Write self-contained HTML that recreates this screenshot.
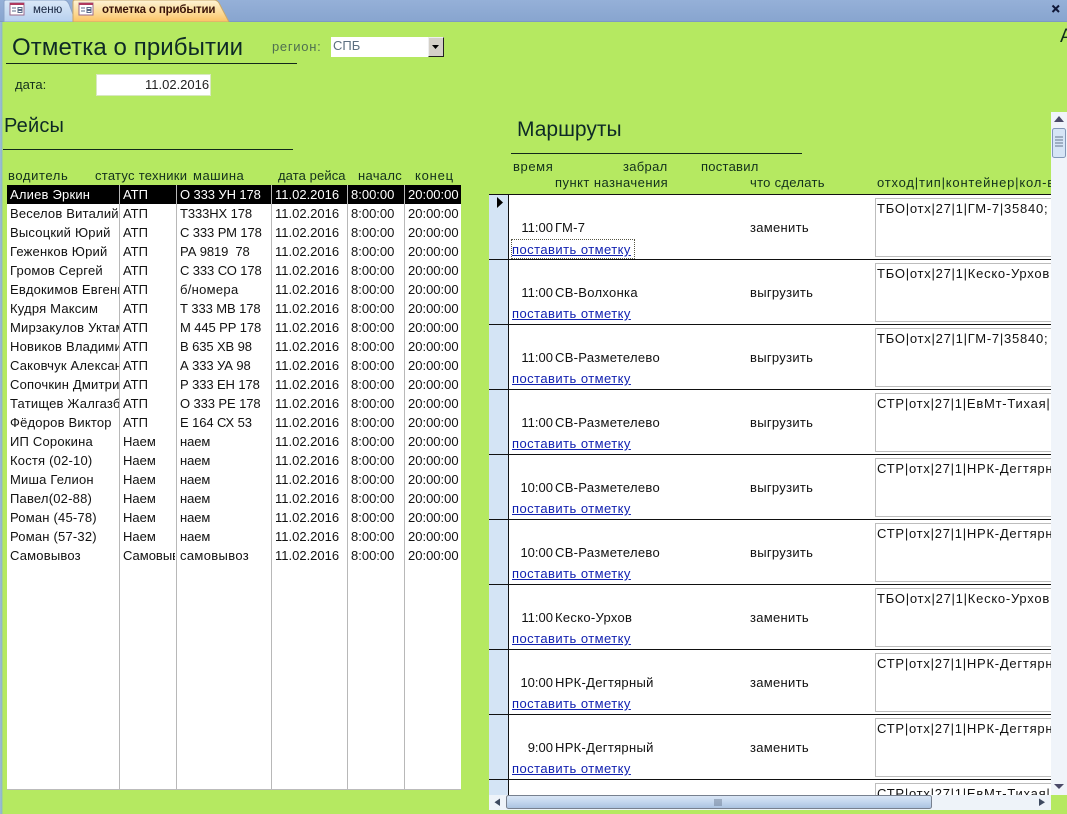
<!DOCTYPE html>
<html lang="ru"><head><meta charset="utf-8"><title>отметка о прибытии</title>
<style>
html,body{margin:0;padding:0}
body{width:1067px;height:814px;position:relative;overflow:hidden;background:#b5e961;font-family:"Liberation Sans","DejaVu Sans",sans-serif;font-size:13px;color:#111}
div,span,a{position:absolute;white-space:nowrap;box-sizing:border-box}
.h{color:#12301c;line-height:16px;height:16px}
.ln{background:#12281a;height:1px}
#grid{left:7px;top:185px;width:454px;height:605px;background:#fff;border-bottom:1px solid #bbb}
.v{top:0;bottom:0;width:1px;background:#b8b8b8}
.r{left:0;width:454px;height:19px;line-height:19px}
.r span{top:0;height:19px;overflow:hidden}
.a{left:3px;width:109px;letter-spacing:.2px}.b{left:116px;width:52px}.c{left:173px;width:90px;letter-spacing:-.1px}.d{left:268px;width:70px}.e{left:344px;width:50px}.f{left:401px;width:53px}
#right{left:489px;top:195px;width:562px;height:600px;overflow:hidden;background:#fff}
#sel{left:0;top:0;width:20px;height:600px;background:#d4e4f5;border-right:1px solid #111}
.rw{left:0;width:562px;height:65px}
.rw i{position:absolute;left:0;right:0;top:64px;height:1px;background:#111}
.t{left:0;width:64px;top:25px;text-align:right;line-height:16px}
.p{left:66px;top:25px;line-height:16px;letter-spacing:.3px}
.w{left:261px;top:25px;line-height:16px;letter-spacing:.3px}
.l{left:23px;top:46px;color:#0f1fb0;text-decoration:underline;line-height:16px;letter-spacing:.45px}
.x{left:386px;top:3px;width:190px;height:59px;border:1px solid #bdbdbd;line-height:16px;overflow:hidden;background:#fff}
.x span{left:1px;top:2px;letter-spacing:.75px}
</style></head><body>
<!-- tab bar -->
<div style="left:0;top:0;width:1067px;height:21px;background:linear-gradient(#95b0d8,#88a5cf)"></div>
<div style="left:0;top:21px;width:1067px;height:1px;background:#7d9ac4"></div>
<div style="left:0;top:22px;width:3px;height:792px;background:linear-gradient(90deg,#9dbbd8,#8fb8c8 60%,#b5e961)"></div>
<svg style="position:absolute;left:0;top:0" width="240" height="22">
<defs><linearGradient id="g1" x1="0" y1="0" x2="0" y2="1"><stop offset="0" stop-color="#dce9f8"/><stop offset="1" stop-color="#b7d0ee"/></linearGradient>
<linearGradient id="g2" x1="0" y1="0" x2="0" y2="1"><stop offset="0" stop-color="#fdf3d6"/><stop offset=".6" stop-color="#fcd994"/><stop offset="1" stop-color="#fbc263"/></linearGradient></defs>
<path d="M4 22V2Q4 0 6 0H64Q67 0 69 4L76 22Z" fill="url(#g1)" stroke="#8aa3c8"/>
<path d="M73 22V2Q73 0 75 0H214Q217 0 219 3L229 22Z" fill="url(#g2)" stroke="#c9a86a"/>
<g fill="#fff" stroke="#9a6a8c"><rect x="10" y="3" width="14" height="12"/><rect x="79" y="3" width="14" height="12"/></g>
<g fill="#b0395e"><rect x="10" y="3" width="14" height="2"/><rect x="79" y="3" width="14" height="2"/></g>
<g stroke="#5a6a8a" fill="none"><path d="M12 8h4M12 11h4M18 7.500h4v2h-4zM18 10.500h4v2h-4z"/><path d="M81 8h4M81 11h4M87 7.500h4v2h-4zM87 10.500h4v2h-4z"/></g>
</svg>
<span style="left:33px;top:3px;font-size:11.500px;line-height:14px;color:#15233e">меню</span>
<span style="left:102px;top:3px;font-size:11.500px;font-weight:bold;line-height:14px;color:#3a1408;letter-spacing:-.15px">отметка о прибытии</span>
<svg style="position:absolute;left:1051px;top:4px" width="10" height="10"><path d="M1.500 1.500L8 8M8 1.500L1.500 8" stroke="#101838" stroke-width="2"/></svg>
<span style="left:1060px;top:26px;font-size:19px;line-height:22px;color:#12301c">A</span>
<!-- form head -->
<span style="left:12px;top:33px;font-size:24px;line-height:30px;color:#0e2a26;letter-spacing:.1px">Отметка о прибытии</span>
<div class="ln" style="left:6px;top:63px;width:291px"></div>
<span style="left:272px;top:39px;line-height:16px;color:#4f7050;letter-spacing:.7px">регион:</span>
<div style="left:331px;top:37px;width:113px;height:20px;background:#fff"></div>
<span style="left:333px;top:38px;line-height:16px;color:#5c6f80">СПБ</span>
<div style="left:428px;top:37px;width:16px;height:20px;background:#d4d0c8;border:1px solid;border-color:#eee #222 #222 #eee"></div>
<svg style="position:absolute;left:432px;top:45px" width="8" height="5"><path d="M0 0H7L3.500 4Z" fill="#000"/></svg>
<span style="left:15px;top:77px;line-height:16px;color:#12301c">дата:</span>
<div style="left:96px;top:74px;width:115px;height:22px;background:#fff;border:1px solid #d8e8c0"></div>
<span style="left:145px;top:77px;line-height:16px;color:#222">11.02.2016</span>
<span style="left:4px;top:113px;font-size:20px;line-height:26px;color:#0e2a26;letter-spacing:.2px">Рейсы</span>
<div class="ln" style="left:3px;top:149px;width:290px"></div>
<span style="left:517px;top:117px;font-size:21px;line-height:26px;color:#0e2a26">Маршруты</span>
<div class="ln" style="left:511px;top:153px;width:291px"></div>
<!-- left headers -->
<span class="h" style="left:8px;top:168px;letter-spacing:.6px">водитель</span>
<span class="h" style="left:95px;top:168px;letter-spacing:.27px">статус техники</span>
<span class="h" style="left:193px;top:168px;letter-spacing:.5px">машина</span>
<span class="h" style="left:278px;top:168px;letter-spacing:.1px">дата рейса</span>
<span class="h" style="left:358px;top:168px;letter-spacing:.3px">началс</span>
<span class="h" style="left:415px;top:168px;letter-spacing:.8px">конец</span>
<!-- left grid -->
<div id="grid">
<div class="r" style="top:0;background:#000;color:#fff"><span class="a">Алиев Эркин</span><span class="b">АТП</span><span class="c">О 333 УН 178</span><span class="d">11.02.2016</span><span class="e">8:00:00</span><span class="f">20:00:00</span></div>
<div class="r" style="top:19px"><span class="a">Веселов Виталий</span><span class="b">АТП</span><span class="c">Т333НХ 178</span><span class="d">11.02.2016</span><span class="e">8:00:00</span><span class="f">20:00:00</span></div>
<div class="r" style="top:38px"><span class="a">Высоцкий Юрий</span><span class="b">АТП</span><span class="c">С 333 РМ 178</span><span class="d">11.02.2016</span><span class="e">8:00:00</span><span class="f">20:00:00</span></div>
<div class="r" style="top:57px"><span class="a">Геженков Юрий</span><span class="b">АТП</span><span class="c">РА 9819&nbsp; 78</span><span class="d">11.02.2016</span><span class="e">8:00:00</span><span class="f">20:00:00</span></div>
<div class="r" style="top:76px"><span class="a">Громов Сергей</span><span class="b">АТП</span><span class="c">С 333 СО 178</span><span class="d">11.02.2016</span><span class="e">8:00:00</span><span class="f">20:00:00</span></div>
<div class="r" style="top:95px"><span class="a">Евдокимов Евгений</span><span class="b">АТП</span><span class="c" style="letter-spacing:.3px">б/номера</span><span class="d">11.02.2016</span><span class="e">8:00:00</span><span class="f">20:00:00</span></div>
<div class="r" style="top:114px"><span class="a">Кудря Максим</span><span class="b">АТП</span><span class="c">Т 333 МВ 178</span><span class="d">11.02.2016</span><span class="e">8:00:00</span><span class="f">20:00:00</span></div>
<div class="r" style="top:133px"><span class="a">Мирзакулов Уктам</span><span class="b">АТП</span><span class="c">М 445 РР 178</span><span class="d">11.02.2016</span><span class="e">8:00:00</span><span class="f">20:00:00</span></div>
<div class="r" style="top:152px"><span class="a">Новиков Владимир</span><span class="b">АТП</span><span class="c">В 635 ХВ 98</span><span class="d">11.02.2016</span><span class="e">8:00:00</span><span class="f">20:00:00</span></div>
<div class="r" style="top:171px"><span class="a">Саковчук Александр</span><span class="b">АТП</span><span class="c">А 333 УА 98</span><span class="d">11.02.2016</span><span class="e">8:00:00</span><span class="f">20:00:00</span></div>
<div class="r" style="top:190px"><span class="a">Сопочкин Дмитрий</span><span class="b">АТП</span><span class="c">Р 333 ЕН 178</span><span class="d">11.02.2016</span><span class="e">8:00:00</span><span class="f">20:00:00</span></div>
<div class="r" style="top:209px"><span class="a">Татищев Жалгазбек</span><span class="b">АТП</span><span class="c">О 333 РЕ 178</span><span class="d">11.02.2016</span><span class="e">8:00:00</span><span class="f">20:00:00</span></div>
<div class="r" style="top:228px"><span class="a">Фёдоров Виктор</span><span class="b">АТП</span><span class="c">Е 164 СХ 53</span><span class="d">11.02.2016</span><span class="e">8:00:00</span><span class="f">20:00:00</span></div>
<div class="r" style="top:247px"><span class="a">ИП Сорокина</span><span class="b">Наем</span><span class="c">наем</span><span class="d">11.02.2016</span><span class="e">8:00:00</span><span class="f">20:00:00</span></div>
<div class="r" style="top:266px"><span class="a">Костя (02-10)</span><span class="b">Наем</span><span class="c">наем</span><span class="d">11.02.2016</span><span class="e">8:00:00</span><span class="f">20:00:00</span></div>
<div class="r" style="top:285px"><span class="a">Миша Гелион</span><span class="b">Наем</span><span class="c">наем</span><span class="d">11.02.2016</span><span class="e">8:00:00</span><span class="f">20:00:00</span></div>
<div class="r" style="top:304px"><span class="a">Павел(02-88)</span><span class="b">Наем</span><span class="c">наем</span><span class="d">11.02.2016</span><span class="e">8:00:00</span><span class="f">20:00:00</span></div>
<div class="r" style="top:323px"><span class="a">Роман (45-78)</span><span class="b">Наем</span><span class="c">наем</span><span class="d">11.02.2016</span><span class="e">8:00:00</span><span class="f">20:00:00</span></div>
<div class="r" style="top:342px"><span class="a">Роман (57-32)</span><span class="b">Наем</span><span class="c">наем</span><span class="d">11.02.2016</span><span class="e">8:00:00</span><span class="f">20:00:00</span></div>
<div class="r" style="top:361px"><span class="a">Самовывоз</span><span class="b">Самовывоз</span><span class="c" style="letter-spacing:.35px">самовывоз</span><span class="d">11.02.2016</span><span class="e">8:00:00</span><span class="f">20:00:00</span></div>
<div class="v" style="left:112px"></div><div class="v" style="left:169px"></div><div class="v" style="left:264px"></div><div class="v" style="left:340px"></div><div class="v" style="left:397px"></div>
</div>
<!-- right headers -->
<span class="h" style="left:513px;top:159px;letter-spacing:.6px">время</span>
<span class="h" style="left:623px;top:159px;letter-spacing:.3px">забрал</span>
<span class="h" style="left:701px;top:159px;letter-spacing:.25px">поставил</span>
<span class="h" style="left:555px;top:175px;letter-spacing:.45px">пункт назначения</span>
<span class="h" style="left:750px;top:175px;letter-spacing:.3px">что сделать</span>
<div class="h" style="left:877px;top:175px;width:174px;overflow:hidden;letter-spacing:.8px">отход|тип|контейнер|кол-во</div>
<div style="left:489px;top:194px;width:562px;height:1px;background:#111"></div>
<!-- right list -->
<div id="right">
<div id="sel"></div>
<div class="rw" style="top:0"><i></i><span class="t">11:00</span><span class="p">ГМ-7</span><span class="w">заменить</span><a class="l" style="top:47px">поставить отметку</a><div class="x"><span>ТБО|отх|27|1|ГМ-7|35840;</span></div></div>
<div class="rw" style="top:65px"><i></i><span class="t">11:00</span><span class="p">СВ-Волхонка</span><span class="w">выгрузить</span><a class="l">поставить отметку</a><div class="x"><span>ТБО|отх|27|1|Кеско-Урхов</span></div></div>
<div class="rw" style="top:130px"><i></i><span class="t">11:00</span><span class="p">СВ-Разметелево</span><span class="w">выгрузить</span><a class="l">поставить отметку</a><div class="x"><span>ТБО|отх|27|1|ГМ-7|35840;</span></div></div>
<div class="rw" style="top:195px"><i></i><span class="t">11:00</span><span class="p">СВ-Разметелево</span><span class="w">выгрузить</span><a class="l">поставить отметку</a><div class="x"><span>СТР|отх|27|1|ЕвМт-Тихая|</span></div></div>
<div class="rw" style="top:260px"><i></i><span class="t">10:00</span><span class="p">СВ-Разметелево</span><span class="w">выгрузить</span><a class="l">поставить отметку</a><div class="x"><span>СТР|отх|27|1|НРК-Дегтярный</span></div></div>
<div class="rw" style="top:325px"><i></i><span class="t">10:00</span><span class="p">СВ-Разметелево</span><span class="w">выгрузить</span><a class="l">поставить отметку</a><div class="x"><span>СТР|отх|27|1|НРК-Дегтярный</span></div></div>
<div class="rw" style="top:390px"><i></i><span class="t">11:00</span><span class="p">Кеско-Урхов</span><span class="w">заменить</span><a class="l">поставить отметку</a><div class="x"><span>ТБО|отх|27|1|Кеско-Урхов</span></div></div>
<div class="rw" style="top:455px"><i></i><span class="t">10:00</span><span class="p">НРК-Дегтярный</span><span class="w">заменить</span><a class="l">поставить отметку</a><div class="x"><span>СТР|отх|27|1|НРК-Дегтярный</span></div></div>
<div class="rw" style="top:520px"><i></i><span class="t">9:00</span><span class="p">НРК-Дегтярный</span><span class="w">заменить</span><a class="l">поставить отметку</a><div class="x"><span>СТР|отх|27|1|НРК-Дегтярный</span></div></div>
<div class="rw" style="top:585px"><div class="x"><span>СТР|отх|27|1|ЕвМт-Тихая|</span></div></div>
</div>
<svg style="position:absolute;left:496px;top:197px" width="9" height="12"><path d="M1 0V11L7 5.500Z" fill="#000"/></svg>
<div style="left:511px;top:239px;width:124px;height:20px;border:1px dotted #554"></div>
<!-- vertical scrollbar -->
<div style="left:1051px;top:112px;width:16px;height:683px;background:#f0f4fa"></div>
<svg style="position:absolute;left:1051px;top:112px" width="16" height="50">
<path d="M3 10L8 4L13 10Z" fill="#4a4a68"/>
<rect x="1.500" y="16.500" width="13" height="29" rx="2" fill="#d6e5f6" stroke="#8298b8"/>
<path d="M4 25h8M4 28h8M4 31h8M4 34h8" stroke="#66788f"/>
</svg>
<svg style="position:absolute;left:1051px;top:780px" width="16" height="14"><path d="M3 4H13L8 9Z" fill="#4a4a68"/></svg>
<!-- horizontal scrollbar -->
<div style="left:489px;top:795px;width:562px;height:15px;background:#eef3f9"></div>
<svg style="position:absolute;left:489px;top:795px" width="578" height="15">
<defs><linearGradient id="g3" x1="0" y1="0" x2="0" y2="1"><stop offset="0" stop-color="#dbe7f6"/><stop offset=".5" stop-color="#c3d6ee"/><stop offset="1" stop-color="#a9c1de"/></linearGradient></defs>
<path d="M11 3.500V11L5.500 7.250Z" fill="#3e4a60"/>
<rect x="17.500" y="0.500" width="425" height="13" rx="2" fill="url(#g3)" stroke="#77808f"/>
<path d="M226 4v7M228 4v7M230 4v7M232 4v7" stroke="#6d7d94"/>
<path d="M550 3.500V11L556 7.250Z" fill="#3e4a60"/>
</svg>
</body></html>
